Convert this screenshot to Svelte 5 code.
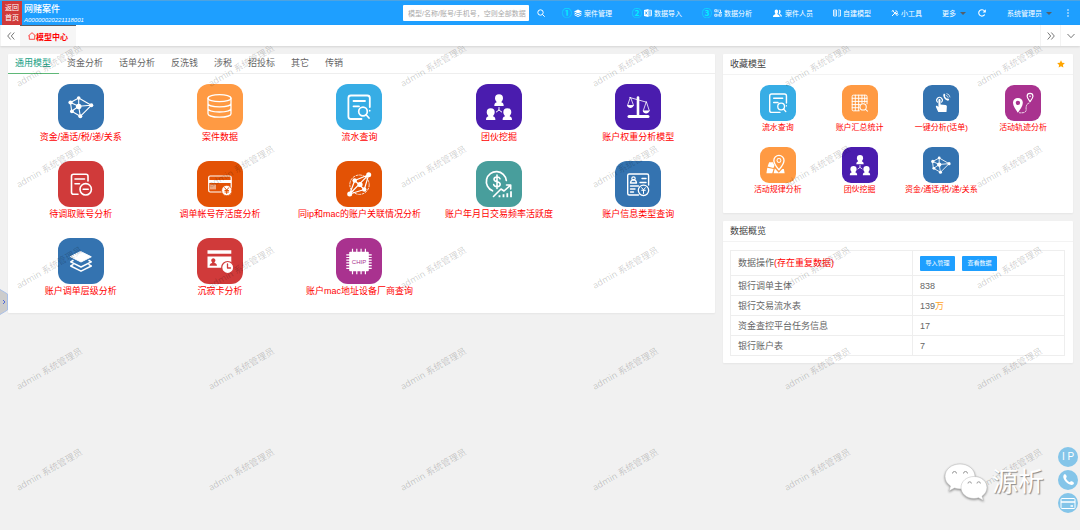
<script lang="ts">
	const steps = [
		{ no: '①', icon: 'stack', label: '案件管理' },
		{ no: '②', icon: 'import', label: '数据导入' },
		{ no: '③', icon: 'blocks', label: '数据分析' },
		{ no: '', icon: 'people', label: '案件人员' },
		{ no: '', icon: 'build', label: '自建模型' },
		{ no: '', icon: 'tools', label: '小工具' }
	];

	const tabs = ['通用模型', '资金分析', '话单分析', '反洗钱', '涉税', '招投标', '其它', '传销'];
	let active = $state('通用模型');

	const models = [
		{ icon: 'network', color: '#3473b0', label: '资金/通话/税/递/关系' },
		{ icon: 'database', color: '#ff9a43', label: '案件数据' },
		{ icon: 'query', color: '#37ade5', label: '流水查询' },
		{ icon: 'gang', color: '#4a1cae', label: '团伙挖掘' },
		{ icon: 'scale', color: '#4a1cae', label: '账户权重分析模型' },
		{ icon: 'pending', color: '#d03a3a', label: '待调取账号分析' },
		{ icon: 'card', color: '#e35205', label: '调单帐号存活度分析' },
		{ icon: 'link', color: '#e35205', label: '同ip和mac的账户关联情况分析' },
		{ icon: 'trend', color: '#489e9c', label: '账户年月日交易频率活跃度' },
		{ icon: 'profile', color: '#3473b0', label: '账户信息类型查询' },
		{ icon: 'layers', color: '#3473b0', label: '账户调单层级分析' },
		{ icon: 'idle', color: '#d03a3a', label: '沉寂卡分析' },
		{ icon: 'chip', color: '#a9328f', label: '账户mac地址设备厂商查询' }
	];

	const favorites = [
		{ icon: 'query', color: '#37ade5', label: '流水查询' },
		{ icon: 'summary', color: '#ff9a43', label: '账户汇总统计' },
		{ icon: 'touch', color: '#3473b0', label: '一键分析(话单)' },
		{ icon: 'track', color: '#a9328f', label: '活动轨迹分析' },
		{ icon: 'map', color: '#ff9a43', label: '活动规律分析' },
		{ icon: 'gang', color: '#4a1cae', label: '团伙挖掘' },
		{ icon: 'network', color: '#3473b0', label: '资金/通话/税/递/关系' }
	];

	const stats = [
		{ name: '银行调单主体', value: '838', unit: '' },
		{ name: '银行交易流水表', value: '139', unit: '万' },
		{ name: '资金查控平台任务信息', value: '17', unit: '' },
		{ name: '银行账户表', value: '7', unit: '' }
	];

	const marks = Array.from({ length: 30 });
</script>

{#snippet person(x, y)}
	<g transform="translate({x} {y})" fill="#fff" stroke="none">
		<path d="M0-4.200a4 4 0 0 1 4 4c0 1.600-.8 2.600-1.500 3.400v.8c1.500.2 2.200 1.300 2.200 3.600h-9.400c0-2.300.7-3.400 2.200-3.600v-.8C-3.200 2.400-4 1.400-4-.2a4 4 0 0 1 4-4z" />
	</g>
{/snippet}

{#snippet glyph(name, color)}
	<svg class="glyph" viewBox="0 0 46 46" fill="none" stroke="#fff" stroke-width="1.6" stroke-linecap="round" stroke-linejoin="round" aria-hidden="true">
		{#if name === 'network'}
			<path stroke-width="1.1" d="M12.500 18.500 20.700 14l12.600 7.300-11 11-8.600-5zM20.700 14v8.300M12.500 18.500l8.200 3.800M33.300 21.300l-12.600 1M13.700 27.300l7-5M22.300 32.300l-1.600-10" />
			<g fill="#fff" stroke="none">
				<circle cx="12.500" cy="18.500" r="2.100" /><circle cx="20.700" cy="14" r="1.800" />
				<circle cx="33.300" cy="21.300" r="2" /><circle cx="20.700" cy="22.500" r="2.800" />
				<circle cx="13.900" cy="27.300" r="1.900" /><circle cx="22.300" cy="32.300" r="2" />
			</g>
		{:else if name === 'database'}
			<ellipse stroke-width="1.300" cx="22.500" cy="14.200" rx="11.500" ry="3.500" />
			<path stroke-width="1.300" d="M11 14.200v15.500c0 2 5 3.500 11.500 3.500S34 31.700 34 29.700V14.200M11 19.400c0 2 5 3.400 11.500 3.400S34 21.400 34 19.400M11 24.600c0 2 5 3.400 11.500 3.400S34 26.600 34 24.600" />
		{:else if name === 'query'}
			<path stroke-width="1.800" d="M25.500 35H14.900a2.500 2.500 0 0 1-2.500-2.500v-18.500a2.500 2.500 0 0 1 2.500-2.500h16.400a2.500 2.500 0 0 1 2.500 2.500V23M17.500 17H29M17.500 22.300h5.500" />
			<circle stroke-width="1.700" cx="27" cy="27.500" r="4.300" />
			<path stroke-width="1.700" d="m30.300 31 2.700 3M33.700 26.500v.2" />
		{:else if name === 'gang'}
			{@render person(23, 14.5)}
			{@render person(14.7, 28.5)}
			{@render person(31.3, 28.5)}
			<path stroke-width="1" d="M23 23.500V26l-2.700 2M23 26l2.700 2" />
		{:else if name === 'scale'}
			<path stroke-width="2.600" d="M23 13.500V31" />
			<path stroke-width="3" d="M14 32.500h19" />
			<path stroke-width=".8" d="m14.700 13.500 16.800 4.700M15.300 13.500 12.500 21.500h5.700zM31.200 18l-3 9H34z" />
			<path fill="#fff" stroke="none" d="M12 21.300h6.700c-.5 2-1.700 2.700-3.300 2.700s-2.900-.7-3.400-2.700zM27.700 26.800h6.700c-.5 2-1.700 2.700-3.300 2.700s-2.900-.7-3.400-2.700z" />
		{:else if name === 'pending'}
			<path d="M20 33.200h-4.500a2 2 0 0 1-2-2v-16a2 2 0 0 1 2-2H28a2 2 0 0 1 2 2V20M17 18h9.500M17 22.700h4.500" />
			<circle cx="27.700" cy="28.300" r="5.700" /><path d="M25.200 28.300h5" />
		{:else if name === 'card'}
			<rect stroke-width="1.200" x="11.700" y="15" width="22.500" height="16" rx="1.500" />
			<path stroke-width="3" stroke-linecap="butt" d="M11.700 20.500h22.500" />
			<path stroke-width="1" d="M14 24v4M16 24v4M18 24v4" />
			<circle cx="29.800" cy="29.500" r="5.200" fill="#fff" stroke={color} stroke-width=".8" />
			<path stroke={color} stroke-width="1" d="m27.700 26.700 2 2.500 2-2.500M29.700 29.200v3.300M27.900 29.500h3.600M27.900 31h3.600" />
		{:else if name === 'link'}
			<circle cx="23.500" cy="23.700" r="9.700" stroke-width=".8" stroke-dasharray="2 1.500" />
			<path stroke-width="1.200" d="M13.700 33 32.700 13.700l-14 5.800zM13.700 33l14.600-4.500 4.400-14.800M18.700 19.500l9.600 9" />
			<g fill="#fff" stroke="none">
				<circle cx="13.700" cy="33" r="2.500" /><circle cx="32.700" cy="13.700" r="2.500" />
				<circle cx="18.700" cy="19.500" r="2.200" /><circle cx="24" cy="23.500" r="2.600" /><circle cx="28.300" cy="28.500" r="2.200" />
			</g>
		{:else if name === 'trend'}
			<path stroke-width="1.700" d="M16.500 29.800A10 10 0 1 1 30.300 19.500" />
			<path stroke-width="1.600" d="M24 17.700c-.5-1.300-1.500-1.700-3-1.700-1.700 0-3 .8-3 2.300 0 3.200 6.200 1.700 6.200 5 0 1.500-1.400 2.300-3.200 2.300-1.600 0-2.900-.6-3.300-2M21 14v13.500" />
			<path d="m17.500 35.500 7.500-7.500 3 2 6.300-5.700M30.500 24h4.200v4" />
			<path stroke-width="1.800" stroke-linecap="butt" d="M23.500 36.200v-2M27.500 36.200v-3M31.300 36.200v-4M35 36.200v-6" />
		{:else if name === 'profile'}
			<path stroke-width="1.400" d="M23.500 34h-9.300a1.500 1.500 0 0 1-1.500-1.500v-18a1.500 1.500 0 0 1 1.500-1.500h17.900a1.500 1.500 0 0 1 1.500 1.500V24M15.500 22h6c0-2-1-2.800-2-3.200h-2c-1 .4-2 1.200-2 3.200zM27 17.500h4M25 21.500h6M15.500 25h8M15.500 28h4.500M15.500 31h3" />
			<circle stroke-width="1.200" cx="18.500" cy="17.500" r="1.700" />
			<circle stroke-width="1.300" cx="28.500" cy="29.300" r="5.200" />
			<path stroke-width="1" d="m26.700 26.700 1.800 2.300 1.800-2.300M28.500 29v3.500M26.700 29.300h3.600" />
		{:else if name === 'layers'}
			<path fill="#fff" stroke-width="1" d="m23 13.700 10.300 5.100L23 24l-10.300-5.200z" />
			<path stroke-width="1.500" d="m15 22.500-2.300 1.300L23 29l10.300-5.200L31 22.500M15 26.700 12.700 28 23 33.200 33.300 28 31 26.700" />
		{:else if name === 'idle'}
			<path fill="#fff" stroke="none" d="M10.500 12.200h23.800v3.600H10.500zM10.500 18.600h23.800v11.200H10.500z" />
			<path fill={color} stroke="none" d="M16.300 20.300a2.200 2.200 0 0 1 1.200 4v.8c1.400.3 2.200.8 2.500 2.600h-7.400c.3-1.800 1.100-2.300 2.500-2.600v-.8a2.200 2.200 0 0 1 1.200-4z" />
			<circle cx="30.700" cy="29.500" r="6" fill="#fff" stroke={color} stroke-width="1.200" />
			<path stroke={color} stroke-width="1.300" d="M30.500 26v4h3" />
		{:else if name === 'chip'}
			<path stroke-width="1.200" stroke-linecap="butt" d="M16.500 10.800v25.400M20.800 10.800v25.400M25.100 10.800v25.400M29.400 10.800v25.400M10.300 16.800h25.400M10.300 19.500h25.400M10.300 22.200h25.400M10.300 24.900h25.400M10.300 27.600h25.400M10.300 30.300h25.400" />
			<rect x="13.200" y="13.700" width="19.600" height="19.600" rx="1" fill="#fff" stroke="none" />
			<text x="23" y="25.500" text-anchor="middle" font-size="6" fill={color} stroke="none">CHIP</text>
		{:else if name === 'summary'}
			<path stroke-width="1.200" d="M22 33h-7.500a1.500 1.500 0 0 1-1.500-1.500v-17a1.500 1.500 0 0 1 1.500-1.500h16a1.500 1.500 0 0 1 1.500 1.500V24M17 13v19.500M21.300 13v19.500M25.500 13v10M29 13v9M13 17h19M13 21h19M13 25h10M13 29h9" />
			<circle cx="27" cy="28" r="4" fill={color} stroke-width="1.300" /><path stroke-width="1.300" d="m30 31 2.500 2.500" />
		{:else if name === 'touch'}
			<path stroke-width="1.400" d="M18.500 22a3.600 3.600 0 1 1 5.200 0" />
			<path fill="#fff" stroke="none" d="M19.700 19.500c0-2 2.700-2 2.700 0V25l6.500.7c1 .2 1.600.8 1.600 1.800l-.5 7H19.500l-3-6.500c-.4-1.200 1-2 1.900-1.200l1.300 1.400z" />
			<path fill="#fff" stroke="none" d="M26.500 11.300c.9-.6 1.700.2 2 1.300.3.900-.5 1.300-.5 1.800.5 1.300 1.300 2.300 2.400 3 .5.200 1-.5 1.800-.1 1 .6 1.700 1.400.9 2.200-3.200 2.400-9.100-5-6.600-8.200z" />
			<path stroke-width=".9" d="M30 13.500a3 3 0 0 1 2.200 2.300M30.500 11a5 5 0 0 1 4 4.300" />
		{:else if name === 'track'}
			<path fill="#fff" fill-rule="evenodd" stroke="none" d="M16.500 16.500a6.300 6.300 0 0 1 6.300 6.300c0 4-3.500 8.700-6.300 12.700-2.800-4-6.300-8.700-6.300-12.700a6.300 6.300 0 0 1 6.300-6.300zm0 3.500a2.800 2.800 0 1 0 0 5.600 2.800 2.800 0 0 0 0-5.600z" />
			<path stroke-width="1.500" d="M32 10.800a3.700 3.700 0 0 1 3.700 3.700c0 2.200-2 4.500-3.700 6.800-1.700-2.300-3.700-4.600-3.700-6.800a3.700 3.700 0 0 1 3.700-3.700z" />
			<circle cx="32" cy="14.500" r="1" fill="#fff" stroke="none" />
			<path stroke-width="1.100" stroke-dasharray="2 1.700" d="M18.500 35.500c6 .5 9-1 8.500-4.500-.3-4 .5-7 4-8" />
		{:else if name === 'map'}
			<path fill="#fff" stroke="none" d="M11.700 19.500h4.800l2 4-1.300 3.200L9.700 25zM9.300 26.500l8 1.600-1.600 5.600H8.200zM19 27.500l5 5.500 4.500-5h2l1 5.700H17.400z" />
			<path fill={color} stroke-width="1.700" d="M24.200 10.700a6.500 6.500 0 0 1 6.500 6.500c0 4.300-3.700 8.500-6.500 12-2.800-3.500-6.500-7.700-6.500-12a6.500 6.500 0 0 1 6.500-6.500z" />
			<circle stroke-width="1.300" cx="24.200" cy="17.300" r="2.500" />
		{/if}
	</svg>
{/snippet}

{#snippet menuIcon(name)}
	<svg class="menu-icon {name}" viewBox="0 0 16 16" fill="none" stroke="#fff" stroke-width="1.600" aria-hidden="true">
		{#if name === 'stack'}
			<path fill="#fff" stroke="none" d="m8 1 8 4-8 4-8-4z" />
			<path stroke-width="2" d="m1 8 7 3.500L15 8M1 11.500 8 15l7-3.500" />
		{:else if name === 'import'}
			<path fill="#fff" stroke="none" d="M0 2 9 0v16l-9-2z" />
			<path d="M9 2.500h6v11H9M9 6h6M9 10h6" /><path stroke="#1e9fff" d="m2.500 5 4 6M6.500 5l-4 6" />
		{:else if name === 'blocks'}
			<path d="M1.500 1.500h4v4h-4zM1.500 10.500h4v4h-4zM10.500 9.500h4v5h-4zM8 1v6M8 10v5M11 2h2v4M10 7h6" />
		{:else if name === 'people'}
			<path fill="#fff" stroke="none" d="M6 1c2 0 3 1.500 3 3.500S8 8 7.500 8.500c0 1.500 4.500 1.500 4.500 5.500H0c0-4 4.500-4 4.500-5.500C4 8 3 6.500 3 4.500S4 1 6 1zM10.500 1.500c2 0 3 1.300 3 3.200 0 1.800-1 3-1.500 3.500 0 1.300 4 1.300 4 5.300h-2.800c0-3-1.200-4-3.200-5 1-2 1.300-5 .5-7z" />
		{:else if name === 'build'}
			<path d="M1 2h6v12H1zM1 6h6M1 10h6M10 2h5v12h-5M10 6h3M10 10h3" />
		{:else if name === 'tools'}
			<path stroke-width="2" d="m2 14 8-8M3 3l10 11M2 5l3-3M10 2.500c0 3 1 4 4 3.500M9.500 9.500l3-1 2 3" />
		{/if}
	</svg>
{/snippet}

<div class="page">
	<header class="topbar">
		<a class="home" href="#home">返回<br />首页</a>
		<div class="case">
			<h1>网赌案件</h1>
			<em>A00000020221118001</em>
		</div>
		<form class="search" onsubmit={(e) => e.preventDefault()}>
			<input type="text" aria-label="搜索" placeholder="模型/名称/账号/手机号，空则全部数据" />
			<button type="submit" aria-label="查询">
				<svg viewBox="0 0 8 8" fill="none" stroke="#fff"><circle cx="3.500" cy="3.500" r="2.700" /><path d="m5.500 5.500 2.200 2.200" /></svg>
			</button>
		</form>
		<nav class="menu">
			{#each steps as step}
				<a href="#{step.icon}">
					{#if step.no}<span class="no">{step.no}</span>{/if}
					{@render menuIcon(step.icon)}
					<span>{step.label}</span>
				</a>
			{/each}
			<a href="#more">更多<i class="caret"></i></a>
		</nav>
		<button class="refresh" aria-label="刷新">
			<svg viewBox="0 0 8 8" fill="none" stroke="#fff" stroke-width="1.100"><path d="M6.700 5.500A3.200 3.200 0 1 1 6.500 2" /><path fill="#fff" stroke="none" d="M7.800.3v3.200H4.600z" /></svg>
		</button>
		<a class="user" href="#user">系统管理员<i class="caret"></i></a>
		<button class="dots" aria-label="选项">
			<svg viewBox="0 0 4 8" fill="#fff"><circle cx="2" cy="1" r=".8" /><circle cx="2" cy="4" r=".8" /><circle cx="2" cy="7" r=".8" /></svg>
		</button>
	</header>

	<div class="pagetabs">
		<button class="step" aria-label="向左">
			<svg viewBox="0 0 8 8"><path d="M3.700.500.700 4l3 3.500M7.300.500l-3 3.500 3 3.500" /></svg>
		</button>
		<a class="current" href="#models">
			<svg viewBox="0 0 8 8"><path d="M.3 4 4 .7 7.700 4M1.300 3.500v3.800h5.400V3.500" /></svg>模型中心
		</a>
		<button class="step right" aria-label="向右">
			<svg viewBox="0 0 8 8"><path d="m.7.500 3 3.500-3 3.500M4.300.500l3 3.500-3 3.500" /></svg>
		</button>
		<button class="step" aria-label="展开">
			<svg viewBox="0 0 8 8"><path d="m.500 2 3.500 3.700L7.500 2" /></svg>
		</button>
	</div>

	<main>
		<section class="card">
			<nav class="tabs">
				{#each tabs as tab}
					<button class:active={tab === active} onclick={() => (active = tab)}>{tab}</button>
				{/each}
			</nav>
			<div class="models">
				{#each models as item}
					<a class="model" href="#{item.icon}">
						<span class="tile" style="background: {item.color}">{@render glyph(item.icon, item.color)}</span>
						<span class="label">{item.label}</span>
					</a>
				{/each}
			</div>
		</section>

		<aside>
			<section class="card">
				<h2>
					收藏模型
					<svg class="star" viewBox="0 0 16 16"><path d="m8 .5 2.400 4.900 5.300.7-3.900 3.700 1 5.400L8 12.600l-4.800 2.600 1-5.400L.3 6.100l5.300-.7z" /></svg>
				</h2>
				<div class="models favorites">
					{#each favorites as item}
						<a class="model" href="#{item.icon}">
							<span class="tile" style="background: {item.color}">{@render glyph(item.icon, item.color)}</span>
							<span class="label">{item.label}</span>
						</a>
					{/each}
				</div>
			</section>

			<section class="card">
				<h2>数据概览</h2>
				<table>
					<tbody>
						<tr class="actions">
							<th scope="row">数据操作<span class="warn">(存在重复数据)</span></th>
							<td><button>导入管理</button><button>查看数据</button></td>
						</tr>
						{#each stats as row}
							<tr>
								<th scope="row">{row.name}</th>
								<td>{row.value}<span class="unit">{row.unit}</span></td>
							</tr>
						{/each}
					</tbody>
				</table>
			</section>
		</aside>

		<div class="watermark" aria-hidden="true">
			{#each marks as _}
				<span>admin 系统管理员</span>
			{/each}
		</div>
	</main>

	<button class="handle" aria-label="展开侧栏">
		<svg viewBox="0 0 8 26"><path class="shape" d="M0 .5 7.500 5v16L0 25.500" /><path class="arrow" d="m3 11 2 2-2 2" /></svg>
	</button>

	<div class="brand">
		<svg viewBox="0 0 44 38" aria-hidden="true">
			<path class="bubble" d="M16 1C7.500 1 1 6.500 1 13.500c0 4 2 7.200 5.500 9.500L5 28l5.500-3c1.800.6 3.500.9 5.500.9 8.500 0 15-5.600 15-12.400S24.500 1 16 1z" />
			<path class="eye" d="M8.500 10.500a2 2 0 0 1 4 0M19.500 10.500a2 2 0 0 1 4 0" />
			<path class="bubble" d="M30 13.500c-7.300 0-13 4.800-13 11s5.700 11 13 11c1.500 0 3-.2 4.500-.7l5 2.700-1.500-4.300c3-2 5-5.200 5-8.700 0-6.200-5.700-11-13-11z" />
			<path class="eye" d="M24 20.500a1.700 1.700 0 0 1 3.400 0M33 20.500a1.700 1.700 0 0 1 3.400 0" />
		</svg>
		<span>源析</span>
	</div>

	<div class="floats">
		<button>I P</button>
		<button aria-label="电话">
			<svg viewBox="0 0 20 20" fill="#fff"><path d="M6 4.500c1-.8 2 0 2.500 1.200.6 1.300-.2 1.800-.5 2.600.6 1.800 1.900 3.200 3.700 3.900.8-.3 1.300-1.200 2.600-.7 1.500.6 2.200 1.700 1.200 2.700C12 17.500 2.500 8.500 6 4.500z" /></svg>
		</button>
		<button aria-label="银行卡">
			<svg viewBox="0 0 20 20" fill="none" stroke="#fff"><rect x="3" y="5.500" width="14" height="10" rx="1" /><path d="M3 9h14M12.500 13h2.500" stroke-width="1.600" /></svg>
		</button>
	</div>
</div>

<style>
	:global(body) {
		margin: 0;
		background: #f1f1f1;
	}

	.page {
		position: relative;
		min-height: 100vh;
		display: flex;
		flex-direction: column;
		font-family: 'Liberation Sans', 'Noto Sans CJK SC', sans-serif;
		font-size: 9px;
		color: #666;
		overflow: hidden;
	}

	a {
		color: inherit;
		text-decoration: none;
	}

	button {
		padding: 0;
		border: 0;
		background: none;
		font-family: inherit;
		color: inherit;
		cursor: pointer;
	}

	svg {
		display: block;
	}

	.topbar {
		display: flex;
		align-items: center;
		height: 25px;
		box-sizing: border-box;
		padding: 0 10px 0 2px;
		border-top: 1px solid #4ea3e0;
		background: #1e9fff;
		color: #fff;
		font-size: 7px;
		white-space: nowrap;
	}

	.home {
		width: 20px;
		padding: 2px 0;
		background: #d03a3a;
		line-height: 10px;
		text-align: center;
	}

	.case {
		margin-left: 2px;
	}

	h1 {
		margin: 0;
		font-size: 9px;
		font-weight: 500;
		line-height: 14px;
	}

	.case em {
		display: block;
		font-size: 6px;
		line-height: 8px;
	}

	.search {
		display: flex;
		align-items: center;
		gap: 8px;
		margin: 0 17px 0 auto;
	}

	.search input {
		width: 126px;
		height: 16px;
		box-sizing: border-box;
		padding: 0 0 0 5px;
		border: 0;
		border-radius: 1px;
		background: #fff;
		font-family: inherit;
		font-size: 7px;
	}

	.search input::placeholder {
		color: #aaa;
	}

	.search svg,
	.refresh svg {
		width: 8px;
		height: 8px;
	}

	.menu {
		display: flex;
		gap: 20px;
	}

	.menu a,
	.user {
		display: flex;
		align-items: center;
		gap: 2px;
	}

	.no {
		width: 10px;
		font-family: 'Noto Sans CJK SC', sans-serif;
		font-size: 10px;
		font-weight: 700;
		line-height: 10px;
		color: #00f0ff;
	}

	.menu-icon {
		width: 8px;
		height: 8px;
	}

	.menu-icon.people {
		width: 11px;
		height: 9px;
	}

	.caret {
		margin-left: 2px;
		border: 3px solid transparent;
		border-top-color: #55606a;
		border-bottom-width: 0;
	}

	.refresh {
		margin: 0 21px 0 12px;
	}

	.dots {
		margin-left: 14px;
	}

	.dots svg {
		width: 4px;
		height: 8px;
	}

	.pagetabs {
		position: relative;
		display: flex;
		height: 21px;
		background: #fff;
		box-shadow: 0 1px 2px rgba(0, 0, 0, 0.12);
	}

	.step {
		display: flex;
		align-items: center;
		justify-content: center;
		width: 20px;
		border-left: 1px solid #f3f3f3;
	}

	.step.right {
		margin-left: auto;
	}

	.step svg {
		width: 8px;
		height: 8px;
		fill: none;
		stroke: #555;
		stroke-width: 0.8;
	}

	.current {
		display: flex;
		align-items: center;
		padding: 0 8px;
		border-top: 1px solid #5a5f66;
		background: #f6f6f6;
		font-size: 8px;
		font-weight: 700;
		color: red;
	}

	.current svg {
		width: 8px;
		height: 8px;
		fill: none;
		stroke: red;
		stroke-width: 0.7;
	}

	main {
		position: relative;
		flex: 1;
		display: grid;
		grid-template-columns: 101fr 50fr;
		align-items: start;
		gap: 8px;
		padding: 8px 7px 8px 8px;
	}

	aside {
		display: grid;
		gap: 8px;
	}

	.card {
		min-width: 0;
		background: #fff;
		border-radius: 1px;
		box-shadow: 0 1px 2px rgba(0, 0, 0, 0.05);
	}

	.tabs {
		display: flex;
		border-bottom: 1px solid #eee;
	}

	.tabs button {
		padding: 0 8px;
		font-size: 9px;
		line-height: 19px;
	}

	.tabs button:first-child {
		padding-left: 7px;
	}

	.tabs button.active {
		box-shadow: 0 1px 0 #5fb878;
		color: #16a085;
	}

	.models {
		display: grid;
		grid-template-columns: repeat(5, minmax(0, 1fr));
		gap: 17px 0;
		padding: 10px 7px 15px 3px;
	}

	.model {
		display: flex;
		flex-direction: column;
		align-items: center;
		color: red;
		line-height: 14px;
		white-space: nowrap;
	}

	.tile {
		width: 46px;
		height: 46px;
		border-radius: 12px;
	}

	.favorites {
		grid-template-columns: repeat(4, minmax(0, 1fr));
		gap: 13px 0;
		padding: 10px 9px 17px 14px;
		font-size: 8px;
	}

	.favorites .model {
		line-height: 13px;
	}

	.favorites .tile {
		width: 36px;
		height: 36px;
		border-radius: 9px;
	}

	h2 {
		display: flex;
		align-items: center;
		justify-content: space-between;
		margin: 0;
		padding: 0 8px 0 7px;
		border-bottom: 1px solid #f3f3f3;
		font-size: 9px;
		font-weight: 400;
		line-height: 20px;
		color: #444;
	}

	.star {
		width: 8px;
		height: 8px;
		fill: #ffa500;
	}

	table {
		width: calc(100% - 15px);
		margin: 8px 8px 0 7px;
		border-collapse: collapse;
		table-layout: fixed;
	}

	aside .card:last-child {
		padding-bottom: 7px;
	}

	th,
	td {
		height: 19px;
		padding: 0 7px;
		border: 1px solid #eee;
		font-weight: 400;
		line-height: 12px;
		text-align: left;
	}

	th {
		width: 50%;
	}

	.actions th,
	.actions td {
		height: 24px;
	}

	td button {
		width: 35px;
		height: 15px;
		margin-right: 7px;
		border-radius: 1px;
		background: #1e9fff;
		font-size: 6px;
		line-height: 15px;
		vertical-align: middle;
		color: #fff;
	}

	.warn {
		color: red;
	}

	.unit {
		color: #ffa62b;
	}

	.watermark {
		position: absolute;
		inset: 0;
		display: grid;
		grid-template-columns: repeat(6, 192px);
		grid-auto-rows: 101px;
		place-items: center;
		place-content: start;
		margin: -31px 0 0 -47px;
		clip-path: inset(31px 0 0 0);
		pointer-events: none;
		color: rgba(0, 0, 0, 0.2);
	}

	.watermark span {
		font-family: 'Noto Sans', 'Noto Sans CJK SC', sans-serif;
		transform: rotate(-30deg);
		white-space: nowrap;
	}

	.handle {
		position: absolute;
		left: 0;
		top: 289px;
	}

	.handle svg {
		width: 8px;
		height: 26px;
		fill: none;
	}

	.handle .shape {
		fill: #ccc;
		stroke: #a9bfe8;
	}

	.handle .arrow {
		stroke: #5068d8;
	}

	.brand {
		position: absolute;
		right: 36px;
		bottom: 27px;
		display: flex;
		align-items: center;
		gap: 4px;
		font-size: 26px;
		line-height: 42px;
		color: #fff;
		text-shadow: 1px 1px 1px #888;
	}

	.brand svg {
		width: 44px;
		height: 38px;
		filter: drop-shadow(0 1px 1px #888);
	}

	.bubble {
		fill: #fff;
		stroke: #bbb;
		stroke-width: 0.5;
	}

	.eye {
		fill: none;
		stroke: #999;
	}

	.floats {
		position: absolute;
		right: 2px;
		bottom: 17px;
		display: grid;
		gap: 3px;
	}

	.floats button {
		width: 20px;
		height: 20px;
		border-radius: 50%;
		background: #84c5e9;
		font-size: 10px;
		line-height: 20px;
		color: #fff;
	}
</style>
